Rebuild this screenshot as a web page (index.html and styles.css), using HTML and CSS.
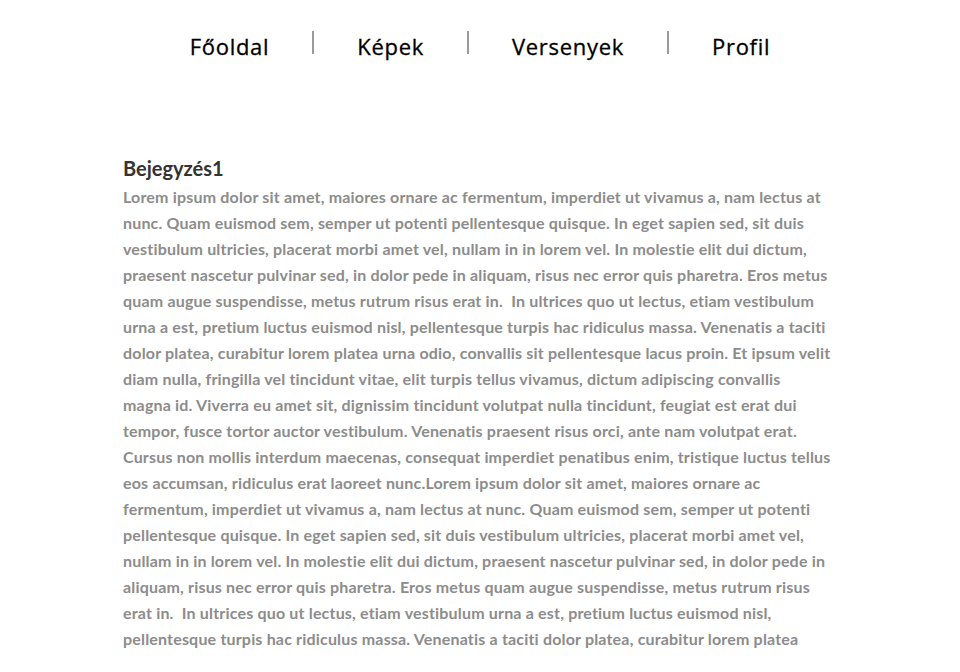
FILE: index.html
```html
<!DOCTYPE html>
<html lang="hu">
<head>
<meta charset="utf-8">
<title>Bejegyzések</title>
<link rel="stylesheet" href="styles.css">
</head>
<body>
<nav class="nav">
  <a class="nav-item" href="#">Főoldal</a>
  <span class="nav-sep"></span>
  <a class="nav-item" href="#">Képek</a>
  <span class="nav-sep"></span>
  <a class="nav-item" href="#">Versenyek</a>
  <span class="nav-sep"></span>
  <a class="nav-item" href="#">Profil</a>
</nav>
<main class="content">
  <article class="post">
    <h2 class="post-title">Bejegyzés1</h2>
    <p class="post-body">Lorem ipsum dolor sit amet, maiores ornare ac fermentum, imperdiet ut vivamus a, nam lectus at<br>
nunc. Quam euismod sem, semper ut potenti pellentesque quisque. In eget sapien sed, sit duis<br>
vestibulum ultricies, placerat morbi amet vel, nullam in in lorem vel. In molestie elit dui dictum,<br>
praesent nascetur pulvinar sed, in dolor pede in aliquam, risus nec error quis pharetra. Eros metus<br>
quam augue suspendisse, metus rutrum risus erat in.&nbsp; In ultrices quo ut lectus, etiam vestibulum<br>
urna a est, pretium luctus euismod nisl, pellentesque turpis hac ridiculus massa. Venenatis a taciti<br>
dolor platea, curabitur lorem platea urna odio, convallis sit pellentesque lacus proin. Et ipsum velit<br>
diam nulla, fringilla vel tincidunt vitae, elit turpis tellus vivamus, dictum adipiscing convallis<br>
magna id. Viverra eu amet sit, dignissim tincidunt volutpat nulla tincidunt, feugiat est erat dui<br>
tempor, fusce tortor auctor vestibulum. Venenatis praesent risus orci, ante nam volutpat erat.<br>
Cursus non mollis interdum maecenas, consequat imperdiet penatibus enim, tristique luctus tellus<br>
eos accumsan, ridiculus erat laoreet nunc.Lorem ipsum dolor sit amet, maiores ornare ac<br>
fermentum, imperdiet ut vivamus a, nam lectus at nunc. Quam euismod sem, semper ut potenti<br>
pellentesque quisque. In eget sapien sed, sit duis vestibulum ultricies, placerat morbi amet vel,<br>
nullam in in lorem vel. In molestie elit dui dictum, praesent nascetur pulvinar sed, in dolor pede in<br>
aliquam, risus nec error quis pharetra. Eros metus quam augue suspendisse, metus rutrum risus<br>
erat in.&nbsp; In ultrices quo ut lectus, etiam vestibulum urna a est, pretium luctus euismod nisl,<br>
pellentesque turpis hac ridiculus massa. Venenatis a taciti dolor platea, curabitur lorem platea</p>
  </article>
</main>
</body>
</html>
```
FILE: styles.css
```css
html, body {
  margin: 0;
  padding: 0;
  background: #ffffff;
}
body {
  font-family: Lato, "Open Sans", sans-serif;
}
.nav {
  display: flex;
  justify-content: center;
  align-items: flex-start;
  padding-top: 31px;
}
.nav-item {
  display: block;
  padding: 0 43px;
  font-family: "Open Sans", Lato, sans-serif;
  font-size: 22px;
  font-weight: 400;
  letter-spacing: 0.7px;
  -webkit-text-stroke: 0.3px #000000;
  line-height: 30px;
  color: #000000;
  text-decoration: none;
}
.nav-sep {
  display: block;
  width: 2px;
  height: 23px;
  background: #9a9a9a;
}
.content {
  width: 714px;
  margin: 0 auto;
  padding-top: 92px;
}
.post-title {
  margin: 0;
  font-size: 20px;
  line-height: 31px;
  font-weight: 700;
  color: #333333;
}
.post-body {
  margin: 0;
  font-size: 16px;
  line-height: 26px;
  font-weight: 700;
  letter-spacing: 0.18px;
  color: #8c8c8c;
  white-space: nowrap;
}
```
